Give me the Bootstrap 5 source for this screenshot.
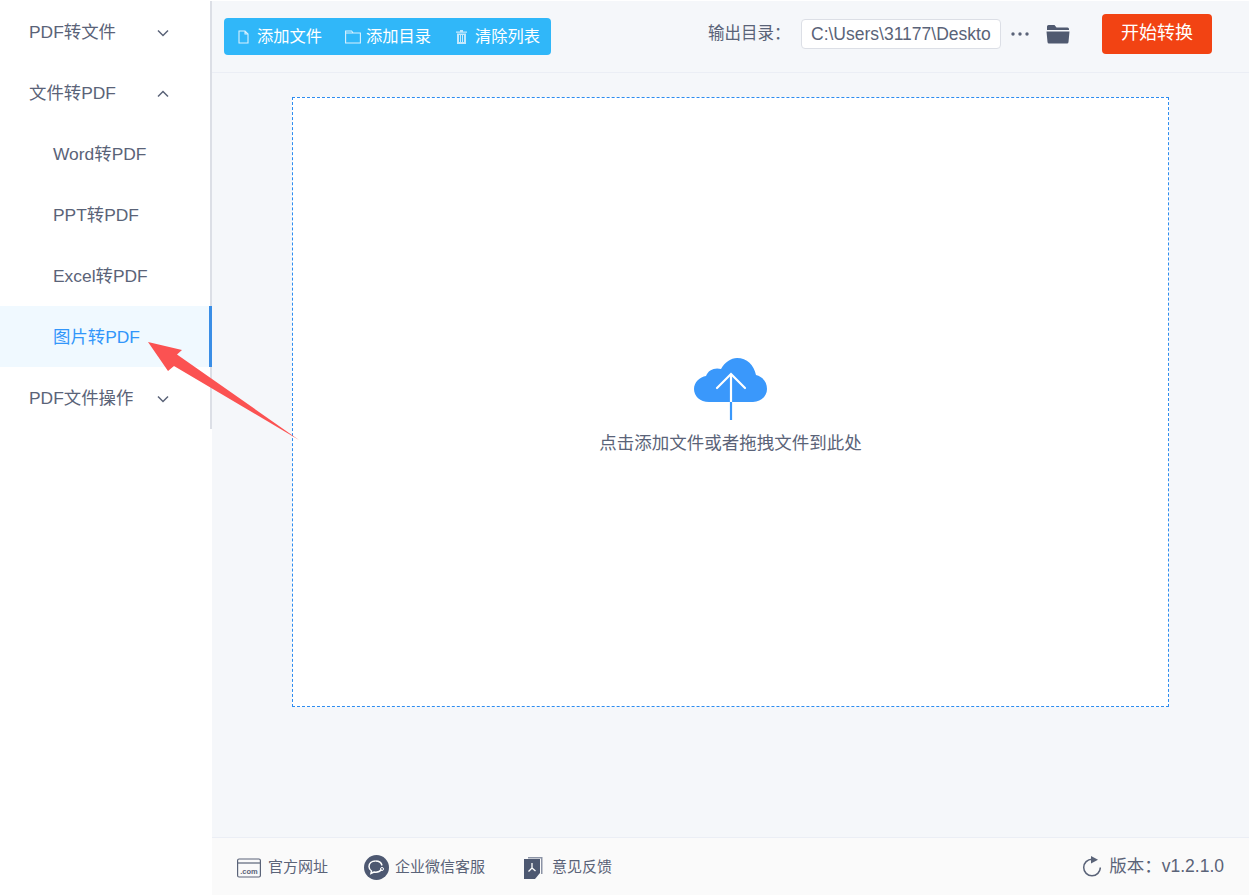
<!DOCTYPE html>
<html lang="zh-CN">
<head>
    <meta charset="UTF-8">
    <meta name="viewport" content="width=device-width, initial-scale=1.0">
    <title>图片转PDF</title>
    <link rel="stylesheet" href="https://cdn.jsdelivr.net/npm/bootstrap@5.3.0/dist/css/bootstrap.min.css">
    <style>
        html, body { height: 100%; }
        body { font-family: "Liberation Sans", "Noto Sans CJK SC", sans-serif; color: #5a6378; background: #fff; overflow: hidden; }
        .app-shell { height: 895px; position: relative; }
        .side-col { width: 212px; flex: none; }
        .side-menu { border-right: 2px solid #dcdfe6; height: 428px; }
        .side-row { height: 61px; font-size: 17.4px; padding-left: 29px; padding-top: 2px; color: #5a6378; }
        .side-row:first-child { margin-top: 1px; }
        .side-row .lbl { width: 127px; white-space: nowrap; }
        .side-sub { padding-left: 53px; }
        .side-sub.on { background: #f0f9ff; color: #3296fa; width: 212px; border-right: 3px solid #3a8ee6; }
        .main-col { background: #f5f7fa; min-width: 0; border-top: 1px solid #fff; }
        .tool-bar { height: 72px; border-bottom: 1px solid #ebeef5; padding-left: 12px; flex: none; }
        .add-group { background: #30b7f9; border-radius: 4px; height: 37px; width: 327px; color: #fff; font-size: 16.25px; padding-left: 14px; flex: none; }
        .add-item { display: flex; align-items: center; white-space: nowrap; }
        .add-file svg { margin-right: 8px; }
        .add-dir { margin-left: 23px; }
        .add-dir svg { margin-right: 5px; }
        .add-clear { margin-left: 25px; }
        .add-clear svg { margin-right: 8px; }
        .right-tools { margin-bottom: 6px; }
        .out-label { font-size: 16.5px; margin-left: 157px; width: 93px; white-space: nowrap; }
        .path-box { width: 200px; height: 30px; background: #fff; border: 1px solid #dcdfe6; border-radius: 4px; font-size: 17.5px; line-height: 28px; padding: 0 9px; overflow: hidden; white-space: nowrap; }
        .dot-more { margin-left: 9px; width: 20px; }
        .folder-ico { margin-left: 16px; }
        .start-btn { width: 110px; height: 40px; margin-left: 32px; padding: 0; background: #f24313; border: 0; border-radius: 4px; color: #fff; font-size: 18px; }
        .work-area { flex: 1; padding: 24px 80px 0; min-height: 0; }
        .drop-zone { width: 877px; height: 610px; background: #fff; border: 1px dashed #2d8cf0; }
        .drop-text { font-size: 17.5px; margin-top: 9px; }
        .cloud-ico { margin-top: 259px; display: block; }
        .foot-bar { height: 58px; background: #fafafa; border-top: 1px solid #ebeef5; padding: 2px 25px 0; flex: none; font-size: 15px; }
        .foot-item { display: flex; align-items: center; white-space: nowrap; }
        .foot-site svg { margin-right: 7px; }
        .foot-chat { margin-left: 36px; }
        .foot-chat svg { margin-right: 6px; }
        .foot-doc { margin-left: 39px; }
        .foot-doc svg { margin-right: 9px; }
        .ver-text { font-size: 17.5px; margin-top: -3px; }
        .red-arrow { position: absolute; left: 140px; top: 335px; pointer-events: none; }
    </style>
</head>
<body>
    <div class="app-shell d-flex">

        <!-- Sidebar -->
        <div class="side-col">
            <div class="side-menu">
                <div class="side-row d-flex align-items-center">
                    <span class="lbl">PDF转文件</span>
                    <svg width="14" height="14" viewBox="0 0 14 14" fill="none" stroke="#5a6378" stroke-width="1.5"><path d="M2 4.5 7 9.5 12 4.5"/></svg>
                </div>
                <div class="side-row d-flex align-items-center">
                    <span class="lbl">文件转PDF</span>
                    <svg width="14" height="14" viewBox="0 0 14 14" fill="none" stroke="#5a6378" stroke-width="1.5"><path d="M2 9.5 7 4.5 12 9.5"/></svg>
                </div>
                <div class="side-row side-sub d-flex align-items-center">Word转PDF</div>
                <div class="side-row side-sub d-flex align-items-center">PPT转PDF</div>
                <div class="side-row side-sub d-flex align-items-center">Excel转PDF</div>
                <div class="side-row side-sub on d-flex align-items-center">图片转PDF</div>
                <div class="side-row d-flex align-items-center">
                    <span class="lbl">PDF文件操作</span>
                    <svg width="14" height="14" viewBox="0 0 14 14" fill="none" stroke="#5a6378" stroke-width="1.5"><path d="M2 4.5 7 9.5 12 4.5"/></svg>
                </div>
            </div>
        </div>

        <!-- Main -->
        <div class="main-col flex-grow-1 d-flex flex-column">
            <div class="tool-bar d-flex align-items-center">
                <div class="add-group d-flex align-items-center">
                    <span class="add-item add-file">
                        <svg width="11" height="14" viewBox="0 0 11 14" fill="none" stroke="#d9f1fe" stroke-width="1.1"><path d="M1 1h6l3 3v9H1zM7 1v3h3"/></svg>添加文件
                    </span>
                    <span class="add-item add-dir">
                        <svg width="16" height="14" viewBox="0 0 16 14" fill="none" stroke="#d9f1fe" stroke-width="1.1"><path d="M.6 1h6l1.500 2h7.300v10H.6zM.6 3h14.800"/></svg>添加目录
                    </span>
                    <span class="add-item add-clear">
                        <svg width="11" height="14" viewBox="0 0 11 14" fill="#c4e9fd"><path d="M4 0h3v1.500h4v1.200H0V1.500h4zM1 3.600h9V14H1zM3 5v7h1V5zm2 0v7h1V5zM7 5v7h1V5z" fill-rule="evenodd"/></svg>清除列表
                    </span>
                </div>
                <span class="out-label right-tools">输出目录：</span>
                <div class="path-box right-tools">C:\Users\31177\Deskto</div>
                <svg class="dot-more right-tools" width="20" height="6" viewBox="0 0 20 6" fill="#5a6378"><circle cx="3" cy="3" r="1.700"/><circle cx="10" cy="3" r="1.700"/><circle cx="17" cy="3" r="1.700"/></svg>
                <svg class="folder-ico right-tools" width="24" height="20" viewBox="0 0 24 20" fill="#505a70"><path d="M1 2.500Q1 1 2.500 1h6l2 2.500h11Q23 3.500 23 5v1H1z"/><path d="M.5 7.500h23L22.500 18Q22.400 19.500 21 19.500H3Q1.600 19.500 1.500 18z"/></svg>
                <button class="start-btn right-tools" type="button">开始转换</button>
            </div>

            <div class="work-area">
                <div class="drop-zone d-flex flex-column align-items-center">
                    <svg class="cloud-ico" width="74" height="64" viewBox="0 0 74 64">
                        <path fill="#3a98fb" d="M15 45C6 45 0 39 0 32 0 25 6 20 12 19 14 13 21 10 27 12 31 5 37 1 43 1 53 1 60 8 62 18 69 20 73 25 73 32 73 39 67 45 59 45Z"/>
                        <path fill="none" stroke="#fff" stroke-width="2.200" stroke-linecap="round" d="M23 31 37 17 51 31"/>
                        <path fill="none" stroke="#fff" stroke-width="2.200" d="M37 17V45"/>
                        <path fill="none" stroke="#3a98fb" stroke-width="2.200" d="M37 45V63"/>
                    </svg>
                    <div class="drop-text">点击添加文件或者拖拽文件到此处</div>
                </div>
            </div>

            <div class="foot-bar d-flex align-items-center">
                <span class="foot-item foot-site">
                    <svg width="24" height="20" viewBox="0 0 24 20"><rect x=".6" y="1" width="22.800" height="18" rx="1.500" fill="none" stroke="#5a6378" stroke-width="1.200"/><path d="M1 5h22" stroke="#5a6378" stroke-width="1.200"/><text x="12" y="15.500" text-anchor="middle" font-size="7.500" font-weight="700" fill="#5a6378" font-family="Liberation Sans">.com</text></svg>官方网址
                </span>
                <span class="foot-item foot-chat">
                    <svg width="25" height="25" viewBox="0 0 25 25"><circle cx="12.500" cy="12.500" r="12.500" fill="#4d5871"/><path d="M11.500 6C7.500 6 5 8.500 5 11.500 5 13.500 6 15 7.500 16L7 18.500 10 17C13 17.500 16 16.500 17.500 14.500" fill="none" stroke="#fff" stroke-width="1.500"/><path d="M11.500 6C15 6 17.500 8 18 10.500" fill="none" stroke="#fff" stroke-width="1.500"/><circle cx="18" cy="14" r="1.500" fill="none" stroke="#fff"/></svg>企业微信客服
                </span>
                <span class="foot-item foot-doc">
                    <svg width="19" height="22" viewBox="0 0 19 22"><path d="M4 0h14.500v17H17V1.500H4z" fill="#8b93a5"/><path d="M0 2h16v14l-5 6H0z" fill="#4d5871"/><path d="M8 6v5M8 11 4.500 14.500M8 11 11.500 14" fill="none" stroke="#fff" stroke-width="1.300"/></svg>意见反馈
                </span>
                <span class="foot-item ver-text ms-auto">
                    <svg class="me-2" width="19" height="21" viewBox="0 0 19 21" fill="none"><path d="M10 3.200A8.300 8.300 0 1 0 18.300 11.500" stroke="#5a6378" stroke-width="1.500"/><path d="M9 0l7 3.700-7 3.800z" fill="#5a6378"/></svg>版本：v1.2.1.0
                </span>
            </div>
        </div>

        <!-- Annotation arrow -->
        <svg class="red-arrow" width="170" height="112" viewBox="0 0 170 112">
            <path fill="#fb5252" d="M8 7 42 15 37 19.500 159 105 34 31 28 36Z"/>
        </svg>
    </div>

    <script src="https://cdn.jsdelivr.net/npm/bootstrap@5.3.0/dist/js/bootstrap.bundle.min.js"></script>
</body>
</html>
